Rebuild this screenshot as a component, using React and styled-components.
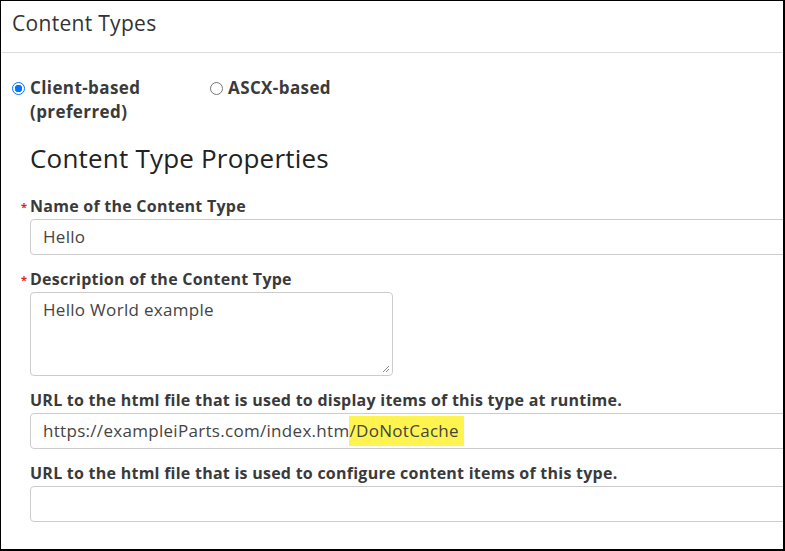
import React from 'react';
import styled, { createGlobalStyle } from 'styled-components';

const GlobalStyle = createGlobalStyle`
  html, body {
    margin: 0;
    padding: 0;
    background: #ffffff;
  }
  body {
    font-family: 'Open Sans', 'Noto Sans', sans-serif;
    color: #333333;
  }
`;

const Frame = styled.div`
  width: 785px;
  height: 551px;
  box-sizing: border-box;
  border: 1px solid #000000;
  border-right-width: 2px;
  border-bottom-width: 2px;
  overflow: hidden;
  background: #ffffff;
`;

const Header = styled.div`
  height: 52px;
  box-sizing: border-box;
  padding: 9px 11px 0;
  border-bottom: 1px solid #dddddd;
  font-size: 21px;
  letter-spacing: 0.3px;
  color: #333333;
  line-height: 26px;
`;

const Body = styled.div`
  padding: 23px 0 0 11px;
`;

const RadioRow = styled.div`
  display: flex;
`;

const RadioOption = styled.label`
  display: flex;
  align-items: flex-start;
  width: ${p => p.width}px;
  font-weight: 700;
  font-size: 17px;
  letter-spacing: 0.4px;
  line-height: 24px;
  color: #3a3a3a;
`;

const RadioDot = styled.span`
  flex: none;
  width: 13px;
  height: 13px;
  margin: 6px 5px 0 0;
  border-radius: 50%;
  box-sizing: border-box;
  border: 1px solid ${p => (p.checked ? '#0075ff' : '#767676')};
  background: ${p =>
    p.checked ? 'radial-gradient(circle, #0075ff 0 3.5px, #ffffff 4px)' : '#ffffff'};
`;

const Section = styled.div`
  padding-left: 18px;
`;

const Title = styled.h2`
  margin: 18px 0 22px;
  font-size: 26px;
  font-weight: 400;
  letter-spacing: 0.2px;
  line-height: 32px;
  color: #222222;
`;

const Field = styled.div`
  margin-bottom: 14px;
`;

const Label = styled.div`
  position: relative;
  font-weight: 700;
  font-size: 16px;
  letter-spacing: 0.25px;
  line-height: 20px;
  color: #3a3a3a;
  margin-bottom: 3px;
`;

const Required = styled.span`
  position: absolute;
  left: -9px;
  top: 1px;
  color: #e0241f;
  font-size: 11px;
`;

const Input = styled.div`
  box-sizing: border-box;
  height: 36px;
  width: 800px;
  border: 1px solid #cccccc;
  border-radius: 4px;
  padding: 0 12px;
  font-size: 17px;
  letter-spacing: 0.3px;
  line-height: 34px;
  color: #444444;
  white-space: nowrap;
`;

const TextArea = styled.div`
  position: relative;
  box-sizing: border-box;
  width: 363px;
  height: 84px;
  border: 1px solid #cccccc;
  border-radius: 4px;
  padding: 6px 12px;
  font-size: 17px;
  letter-spacing: 0.3px;
  line-height: 22px;
  color: #444444;
`;

const Grip = styled.svg`
  position: absolute;
  right: 2px;
  bottom: 2px;
`;

const Mark = styled.span`
  display: inline-block;
  background: #fff44f;
  line-height: 30px;
  padding-right: 5px;
  vertical-align: top;
  margin-top: 2px;
`;

export default function App() {
  return (
    <>
      <GlobalStyle />
      <Frame>
        <Header>Content Types</Header>
        <Body>
          <RadioRow>
            <RadioOption width={198}>
              <RadioDot checked />
              <span>Client-based<br />(preferred)</span>
            </RadioOption>
            <RadioOption width={200}>
              <RadioDot />
              <span>ASCX-based</span>
            </RadioOption>
          </RadioRow>
          <Section>
            <Title>Content Type Properties</Title>
            <Field>
              <Label><Required>*</Required>Name of the Content Type</Label>
              <Input>Hello</Input>
            </Field>
            <Field>
              <Label><Required>*</Required>Description of the Content Type</Label>
              <TextArea>
                Hello World example
                <Grip width="8" height="8" viewBox="0 0 8 8">
                  <path d="M7 1L1 7M7 4L4 7" stroke="#888" strokeWidth="1" fill="none" />
                </Grip>
              </TextArea>
            </Field>
            <Field>
              <Label>URL to the html file that is used to display items of this type at runtime.</Label>
              <Input>https://exampleiParts.com/index.htm<Mark>/DoNotCache</Mark></Input>
            </Field>
            <Field>
              <Label>URL to the html file that is used to configure content items of this type.</Label>
              <Input />
            </Field>
          </Section>
        </Body>
      </Frame>
    </>
  );
}
